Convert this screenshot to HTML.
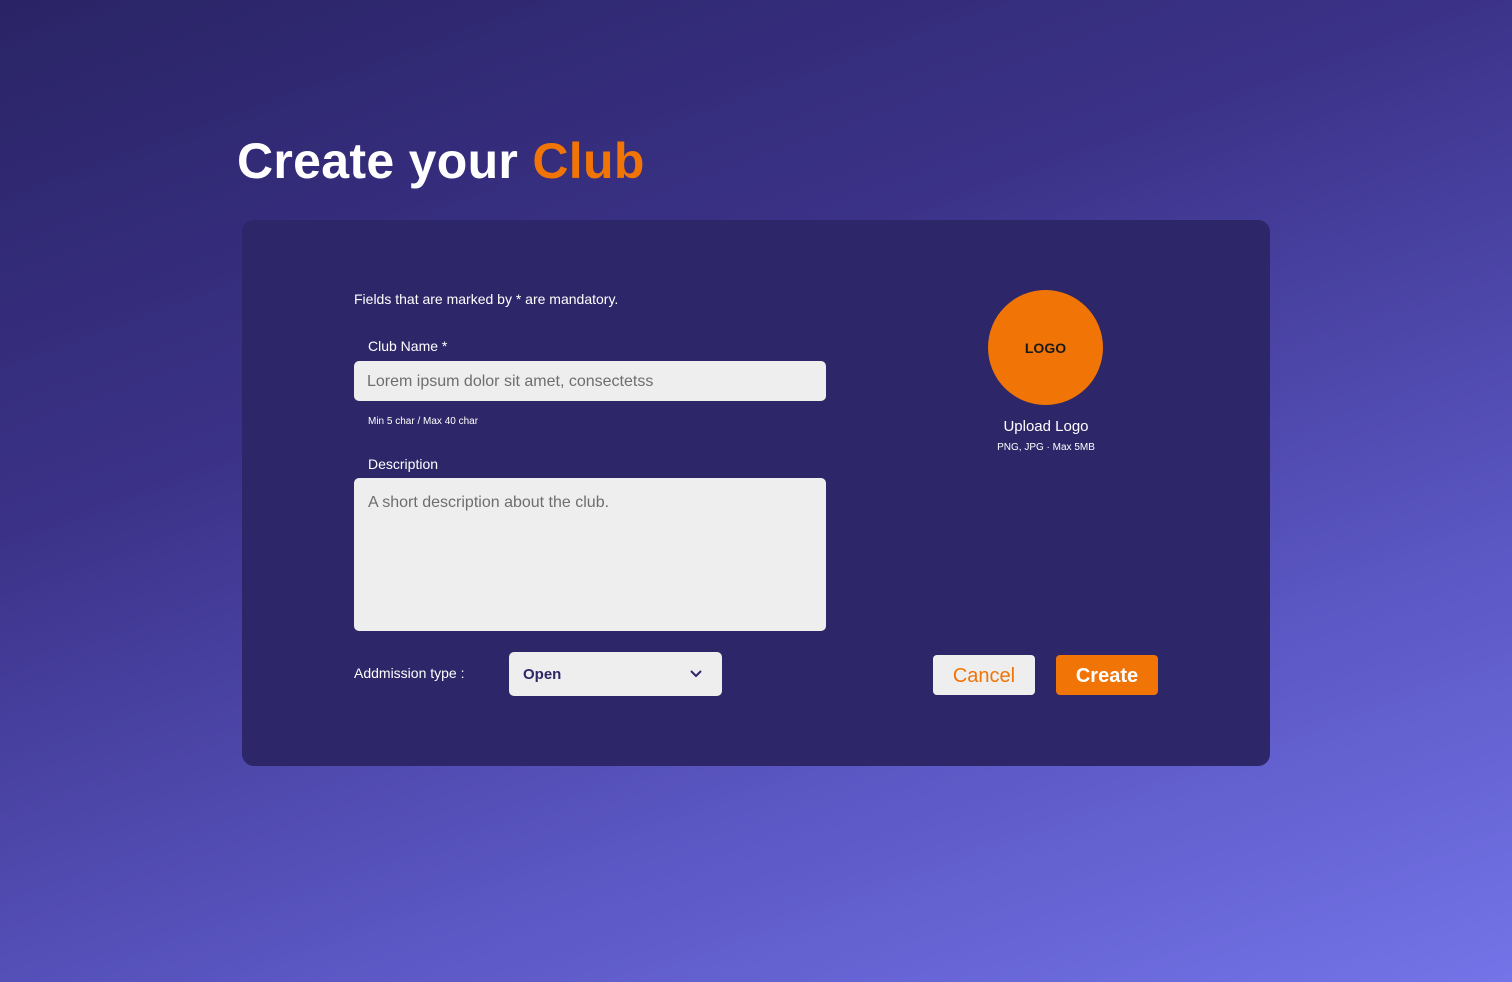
<!DOCTYPE html>
<html><head><style>
*{margin:0;padding:0;box-sizing:border-box}
body{width:1512px;height:982px;overflow:hidden;font-family:"Liberation Sans",sans-serif;background:linear-gradient(160deg,#2a2466 0%,#3b3288 35%,#5a56c2 70%,#7474e8 100%);position:relative;color:#fff}
.abs{position:absolute}
h1{position:absolute;left:237px;top:130px;font-size:50px;font-weight:bold;letter-spacing:0.3px;line-height:62px}
h1 span{color:#f07406}
.card{left:242px;top:220px;width:1028px;height:546px;background:#2d2668;border-radius:12px}
.inp{background:#eeeeee;border-radius:5px;color:#6e6e6e}
.btn{border-radius:4px;font-size:20px;text-align:center;line-height:42px;height:40px}
</style></head><body>
<h1>Create your <span>Club</span></h1>
<div class="abs card"></div>
<div class="abs" style="left:354px;top:291px;font-size:14px">Fields that are marked by * are mandatory.</div>
<div class="abs" style="left:368px;top:338px;font-size:14px">Club Name *</div>
<div class="abs inp" style="left:354px;top:361px;width:472px;height:40px;padding:12px 13px;font-size:16px">Lorem ipsum dolor sit amet, consectetss</div>
<div class="abs" style="left:368px;top:416px;font-size:10px">Min 5 char / Max 40 char</div>
<div class="abs" style="left:368px;top:456px;font-size:14px">Description</div>
<div class="abs inp" style="left:354px;top:478px;width:472px;height:153px;padding:16px 14px;font-size:16px">A short description about the club.</div>
<div class="abs" style="left:354px;top:665px;font-size:14px">Addmission type :</div>
<div class="abs inp" style="left:509px;top:652px;width:213px;height:44px;padding:14px 14px;font-size:15px;color:#2d2668;font-weight:bold">Open
<svg style="position:absolute;right:20px;top:18px" width="12" height="8" viewBox="0 0 12 8"><path d="M1 1l5 5 5-5" stroke="#2d2668" stroke-width="2" fill="none"/></svg></div>
<div class="abs" style="left:988px;top:290px;width:115px;height:115px;border-radius:50%;background:#f07406;color:#1a1a1a;font-weight:bold;font-size:14px;text-align:center;line-height:117px">LOGO</div>
<div class="abs" style="left:946px;top:418px;width:200px;text-align:center;font-size:15px">Upload Logo</div>
<div class="abs" style="left:946px;top:442px;width:200px;text-align:center;font-size:10px">PNG, JPG · Max 5MB</div>
<div class="abs btn" style="left:933px;top:655px;width:102px;background:#eeeeee;color:#f07406">Cancel</div>
<div class="abs btn" style="left:1056px;top:655px;width:102px;background:#f07406;color:#fff;font-weight:bold">Create</div>
</body></html>
